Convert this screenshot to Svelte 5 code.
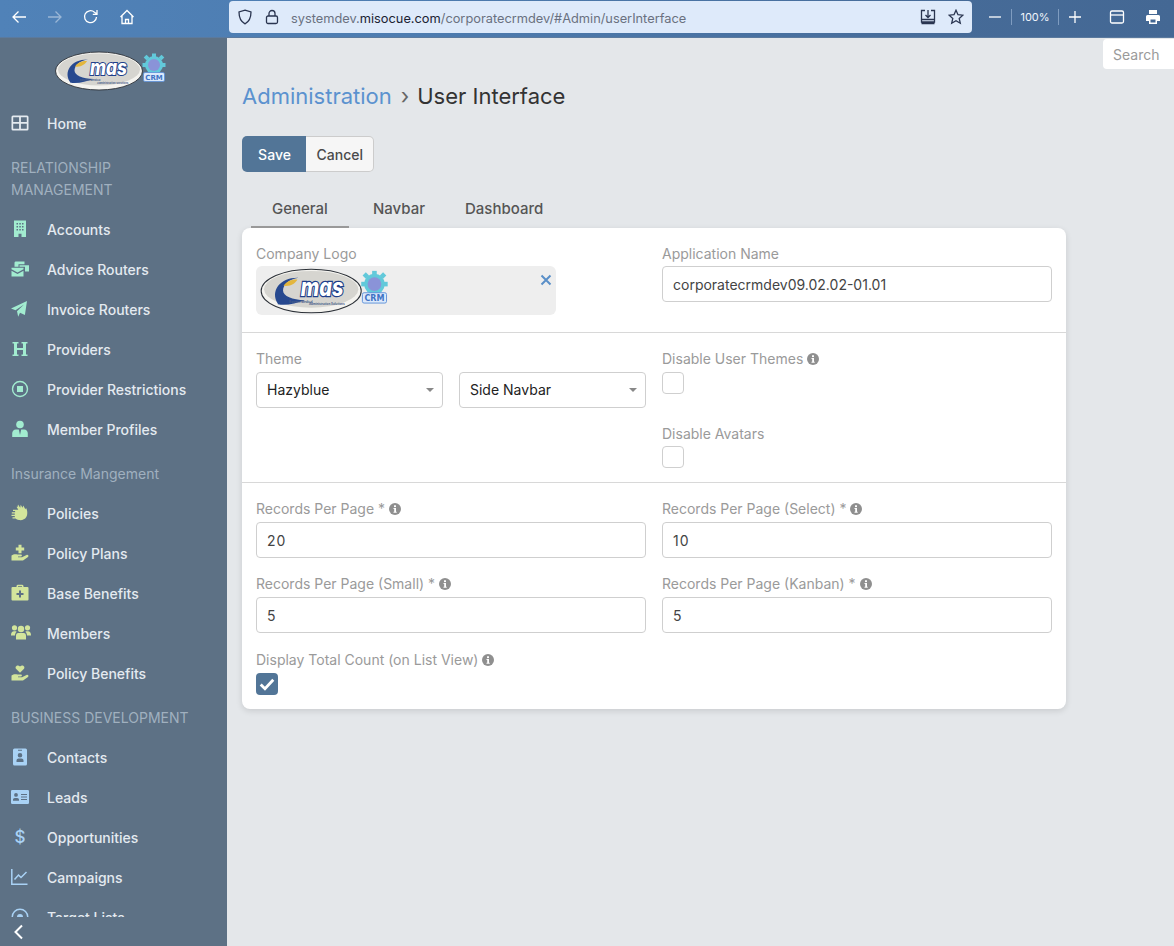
<script lang="ts">
  // sidebar groups: each icon is a small svg path set in an 18 box
  const groups = [
    { label: null, color: "#e4eaf0", items: [["Home", "home"]] },
    {
      label: "RELATIONSHIP MANAGEMENT",
      color: "#a2ecd0",
      items: [
        ["Accounts", "building"],
        ["Advice Routers", "mail"],
        ["Invoice Routers", "plane"],
        ["Providers", "hospital"],
        ["Provider Restrictions", "stop"],
        ["Member Profiles", "tie"],
      ],
    },
    {
      label: "Insurance Mangement",
      color: "#d3e59c",
      items: [
        ["Policies", "hands"],
        ["Policy Plans", "handplus"],
        ["Base Benefits", "medkit"],
        ["Members", "users"],
        ["Policy Benefits", "handheart"],
      ],
    },
    {
      label: "BUSINESS DEVELOPMENT",
      color: "#a9d2f5",
      items: [
        ["Contacts", "contact"],
        ["Leads", "card"],
        ["Opportunities", "dollar"],
        ["Campaigns", "chart"],
        ["Target Lists", "target"],
      ],
    },
  ];

  const tabs = ["General", "Navbar", "Dashboard"];
</script>

{#snippet icon(name)}
  <svg class="nav-icon" viewBox="0 0 18 18" aria-hidden="true">
    {#if name === "home"}
      <path d="M2 1.500h14a1.500 1.500 0 0 1 1.500 1.500v12a1.500 1.500 0 0 1-1.500 1.500H2A1.500 1.500 0 0 1 .5 15V3A1.500 1.500 0 0 1 2 1.500zM2.200 3.200v4.700h5.900V3.200zm7.700 0v4.700h5.900V3.200zM2.200 9.800v5h5.900v-5zm7.700 0v5h5.900v-5z" fill-rule="evenodd" />
    {:else if name === "building"}
      <path d="M3 .5h12v16.500h-4.500V13.800h-3V17H3zM5.500 3v1.500H7V3zm2.800 0v1.500h1.500V3zm2.700 0v1.500h1.500V3zM5.500 6v1.500H7V6zm2.800 0v1.500h1.500V6zm2.700 0v1.500h1.500V6zM5.500 9v1.500H7V9zm2.800 0v1.500h1.500V9zm2.700 0v1.500h1.500V9z" fill-rule="evenodd" />
    {:else if name === "mail"}
      <path d="M4.500 1.500h9v2.800H7.500v2.400H3.500V3a1.500 1.500 0 0 1 1-1.500zM8.500 5.200H18v6.300h-4v-4.800H8.500zM.5 7.800h12v1.500L6.500 12.500.5 9.300zM.5 10.800l6 3.200 6-3.200v5.700H.5z" />
    {:else if name === "plane"}
      <path d="M16 1 13.900 15 9 12.800 7.200 16.800 6 11.200 13 4.500 4.500 10.300 0 8.500z" />
    {:else if name === "hospital"}
      <path d="M1.500 2h6v1.500H6v4.500h6V3.500h-1.500V2h6v1.500H15v11h1.500V16h-6v-1.500H12V10H6v4.500h1.500V16h-6v-1.500H3v-11H1.500z" />
    {:else if name === "stop"}
      <path d="M9 .8a8.200 8.200 0 1 1 0 16.400A8.200 8.200 0 0 1 9 .8zm0 1.400a6.800 6.800 0 1 0 0 13.600A6.800 6.800 0 0 0 9 2.200zM6 6h6v6H6z" fill-rule="evenodd" />
    {:else if name === "tie"}
      <circle cx="9" cy="4.500" r="3.800" /><path d="M5 9.500h2.800L9 15l1.200-5.500H13c2.500 0 3.800 1.800 3.800 4v3.500H1.200v-3.500c0-2.200 1.300-4 3.800-4z" />
    {:else if name === "hands"}
      <path d="M7 .5l2.200 3.200L9.700.8l1.800 3 .8-2.300 2 3.800.8-1.300c1.400 2.500 1.700 6.500.2 9-1.500 2.600-4.500 3.500-7.500 3-1.300-.2-2.500-.7-3.300-1.500H1.500v-1.300h2.300V12H.5v-1.300h3.300V9.500H.8V8.200h3.300V7H2V5.800h5.300L5.500 2.800l1 .2z" />
    {:else if name === "handplus"}
      <path d="M7.500 .8h3v2.700h2.700v3h-2.700v2.700h-3V6.500H4.800v-3h2.700zM.5 11.500c2-1.500 4-1.500 6-1h3.500c1.300 0 1.300 2-.3 2H7v.8h4l4.500-2.400c1.500-.6 2.700 1 1.500 2L12 16.500H.5z" />
    {:else if name === "medkit"}
      <path d="M5.500 3V2A1.500 1.500 0 0 1 7 .8h4A1.500 1.500 0 0 1 12.500 2v1h4a1 1 0 0 1 1 1v11.500a1 1 0 0 1-1 1h-15a1 1 0 0 1-1-1V4a1 1 0 0 1 1-1zM7 2.300V3h4v-.7zM8 6.500V9H5.500v2H8v2.500h2V11h2.500V9H10V6.500z" fill-rule="evenodd" />
    {:else if name === "users"}
      <circle cx="3.500" cy="3.800" r="2.600" /><circle cx="16.500" cy="3.800" r="2.600" /><circle cx="10" cy="5" r="3.200" /><path d="M0 11c0-2.300 1.200-3.800 3-3.800h2l.6.500C4.500 8.600 4 10 4 11.500H0zM20 11c0-2.300-1.200-3.800-3-3.800h-2l-.6.500c1.100.9 1.600 2.300 1.600 3.800h4zM7.300 9h5.400c1.500 0 2.300 1.300 2.300 2.800V15.500H5v-3.700C5 10.300 5.800 9 7.300 9z" />
    {:else if name === "handheart"}
      <path d="M9 8.800 5 4.700C3.500 2.800 6.500 0 9 2.500c2.500-2.500 5.500.3 4 2.200zM.5 11.500c2-1.500 4-1.500 6-1h3.500c1.300 0 1.300 2-.3 2H7v.8h4l4.500-2.400c1.500-.6 2.700 1 1.500 2L12 16.500H.5z" />
    {:else if name === "contact"}
      <path d="M3.500.5h11A1.500 1.500 0 0 1 16 2v14a1.500 1.500 0 0 1-1.500 1.500h-11A1.500 1.500 0 0 1 2 16V2A1.500 1.500 0 0 1 3.500.5zM7 1.800v1h4v-1zM9 5a2.300 2.300 0 1 0 0 4.600A2.300 2.300 0 0 0 9 5zm-3.500 9h7v-1.500c0-1.200-1-2-2-2h-3c-1 0-2 .8-2 2z" fill-rule="evenodd" />
    {:else if name === "card"}
      <path d="M1.200 2h15.600A1.200 1.200 0 0 1 18 3.200v11.600a1.200 1.200 0 0 1-1.200 1.200H1.200A1.200 1.200 0 0 1 0 14.800V3.200A1.200 1.200 0 0 1 1.200 2zM5 5a1.900 1.900 0 1 0 0 3.800A1.900 1.900 0 0 0 5 5zM2 12.800h6v-1C8 10.800 7.200 10 6.200 10H3.800C2.800 10 2 10.800 2 11.800zM10 6v1h6V6zm0 2.500v1h6v-1zm0 2.500v1h6v-1z" fill-rule="evenodd" />
    {:else if name === "dollar"}
      <text x="9" y="15" text-anchor="middle" class="glyph">$</text>
    {:else if name === "chart"}
      <path d="M.8 1V16.200H16.500" class="line" /><path d="M3.500 11.500 7.500 7 10 9.500 15.500 4" class="line" />
    {:else}
      <path d="M9 .5a8.500 8.500 0 1 1 0 17 8.500 8.500 0 0 1 0-17zm0 1.500a7 7 0 1 0 0 14 7 7 0 0 0 0-14zM9 6a3 3 0 1 1 0 6 3 3 0 0 1 0-6z" fill-rule="evenodd" />
    {/if}
  </svg>
{/snippet}

{#snippet logo()}
  <svg class="logo" viewBox="0 0 112 40" aria-label="emas CRM">
    <ellipse cx="44" cy="20" rx="43.500" ry="19" fill="#f4f3ef" stroke="#2c3138" stroke-width=".9" />
    <ellipse cx="44" cy="18.500" rx="41" ry="16" fill="#d6d5d0" />
    <path d="M15 31C8 20 17 8 33 8.500c-8 1-13.500 6-13.500 11 0 5 8 8 19 8.500-8 3-17 5-23.500 3.500z" fill="#27498f" />
    <path d="M20 15.500c2-3.500 7-6 12-5.500-1.500 3-6 6.500-12 5.500z" fill="#e3b63d" />
    <text x="35" y="24" class="logo-word" textLength="37" lengthAdjust="spacingAndGlyphs">mas</text>
    <text x="25" y="30" class="logo-sub">Eastern Medical</text>
    <text x="42" y="32.500" class="logo-sub">Administration Solutions</text>
    <g fill="#62c9da">
      <circle cx="99" cy="14" r="9" />
      <rect x="97" y="2.500" width="4" height="4" /><rect x="97" y="21" width="4" height="4" />
      <rect x="87.500" y="12" width="4" height="4" /><rect x="106.500" y="12" width="4" height="4" />
      <rect x="89.500" y="4.500" width="4" height="4" transform="rotate(45 91.500 6.500)" /><rect x="104.500" y="4.500" width="4" height="4" transform="rotate(45 106.500 6.500)" />
    </g>
    <circle cx="99" cy="14" r="6" fill="#8a93d8" />
    <rect x="88.500" y="21.500" width="21" height="9" rx="1.500" fill="#dbe9fb" stroke="#5b8fd8" stroke-width=".8" />
    <text x="99" y="28.800" text-anchor="middle" class="logo-crm">CRM</text>
  </svg>
{/snippet}

{#snippet info()}
  <svg class="info" viewBox="0 0 12 12" aria-hidden="true">
    <circle cx="6" cy="6" r="6" fill="#8f8f8f" />
    <rect x="5" y="2.300" width="2" height="1.800" fill="#fff" />
    <path d="M4.500 5h2.500v3.700h.7v1H4.500v-1h.7V6h-.7z" fill="#fff" />
  </svg>
{/snippet}

<div class="browser">
  <div class="nav-buttons">
    <svg viewBox="0 0 16 16"><path d="M15 8H2M7.500 2.500 2 8l5.500 5.500" /></svg>
    <svg viewBox="0 0 16 16" class="dim"><path d="M1 8h13M8.500 2.500 14 8l-5.500 5.500" /></svg>
    <svg viewBox="0 0 16 16"><path d="M13.500 8A6 6 0 1 1 11.500 3.200L14 5M14 1v4.300H9.800" /></svg>
    <svg viewBox="0 0 16 16"><path d="M1.500 8 8 1.500 14.500 8M3 7v7.500h10V7M6.500 14.500v-4h3v4" /></svg>
  </div>
  <div class="urlbar">
    <svg class="url-icon" viewBox="0 0 16 16"><path d="M8 1.200 14 3c0 6-1.500 9.500-6 11.800C3.500 12.500 2 9 2 3z" /></svg>
    <svg class="url-icon" viewBox="0 0 16 16"><rect x="2.500" y="7" width="11" height="7.500" rx="1.500" /><path d="M5 7V4.500a3 3 0 0 1 6 0V7" /></svg>
    <span class="url">systemdev.<b>misocue.com</b>/corporatecrmdev/#Admin/userInterface</span>
    <span class="url-end">
      <svg class="url-icon" viewBox="0 0 16 16"><path d="M5 1.500H1.500v11.500h13V1.500H11M8 1v7M5.500 6 8 8.500 10.500 6M1.500 10.500h13M1.500 14.500h13" /></svg>
      <svg class="url-icon" viewBox="0 0 16 16"><path d="M8 1.200l2 4.500 4.900.5-3.700 3.200 1.100 4.800L8 11.700l-4.300 2.500 1.100-4.800L1.100 6.200 6 5.700z" /></svg>
    </span>
  </div>
  <div class="zoom-group">
    <svg viewBox="0 0 12 12"><path d="M0 6h12" /></svg>
    <span class="zoom-val">100%</span>
    <svg viewBox="0 0 12 12"><path d="M0 6h12M6 0v12" /></svg>
  </div>
  <div class="tools">
    <svg viewBox="0 0 16 16"><rect x="1.500" y="2" width="13" height="12" rx="1.500" /><path d="M1.500 6h13" /></svg>
    <svg viewBox="0 0 16 16" class="solid"><path d="M4 1h8v4H4zM2.500 6h11A1.500 1.500 0 0 1 15 7.500V12h-3v3H4v-3H1V7.500A1.500 1.500 0 0 1 2.500 6zM5.500 10.500v3h5v-3z" fill-rule="evenodd" /></svg>
  </div>
</div>

<div class="layout">
  <aside class="sidebar">
    <div class="brand">{@render logo()}</div>
    <nav class="nav">
      {#each groups as g}
        {#if g.label}<div class="nav-label">{g.label}</div>{/if}
        {#each g.items as [text, name]}
          <div class="nav-item" style="color: {g.color}">
            {@render icon(name)}
            <span>{text}</span>
          </div>
        {/each}
      {/each}
    </nav>
    <div class="collapse">
      <svg viewBox="0 0 12 16"><path d="M9 1.500 2.500 8 9 14.500" /></svg>
    </div>
  </aside>

  <main class="page">
    <div class="search">Search</div>
    <h1><span class="crumb">Administration</span><span class="sep">›</span>User Interface</h1>

    <div class="actions">
      <button class="btn primary">Save</button>
      <button class="btn">Cancel</button>
    </div>

    <div class="tabs">
      {#each tabs as t, i}
        <div class="tab" class:active={i === 0}>{t}</div>
      {/each}
    </div>

    <div class="card">
      <section class="row top">
        <div class="field">
          <label>Company Logo</label>
          <div class="logo-box">
            {@render logo()}
            <svg class="remove" viewBox="0 0 12 12"><path d="M1.500 1.500l9 9M10.500 1.500l-9 9" /></svg>
          </div>
        </div>
        <div class="field">
          <label>Application Name</label>
          <div class="input">corporatecrmdev09.02.02-01.01</div>
        </div>
      </section>

      <section class="row theme">
        <div class="field">
          <label>Theme</label>
          <div class="selects">
            <div class="input select">Hazyblue</div>
            <div class="input select">Side Navbar</div>
          </div>
        </div>
        <div class="checks">
          <div class="field">
            <label>Disable User Themes {@render info()}</label>
            <div class="checkbox"></div>
          </div>
          <div class="field avatars">
            <label>Disable Avatars</label>
            <div class="checkbox"></div>
          </div>
        </div>
      </section>

      <section class="row records">
        <div class="field">
          <label>Records Per Page * {@render info()}</label>
          <div class="input num">20</div>
        </div>
        <div class="field">
          <label>Records Per Page (Select) * {@render info()}</label>
          <div class="input num">10</div>
        </div>
        <div class="field">
          <label>Records Per Page (Small) * {@render info()}</label>
          <div class="input num">5</div>
        </div>
        <div class="field">
          <label>Records Per Page (Kanban) * {@render info()}</label>
          <div class="input num">5</div>
        </div>
        <div class="field total">
          <label>Display Total Count (on List View) {@render info()}</label>
          <div class="checkbox checked">
            <svg viewBox="0 0 14 14"><path d="M3 7.300 5.700 10 11 4.300" /></svg>
          </div>
        </div>
      </section>
    </div>
  </main>
</div>

<style>
  :global(body) {
    margin: 0;
    font-family: Inter, "Noto Sans", sans-serif;
    background: #e4e7ea;
    height: 946px;
    overflow: hidden;
  }
  .browser {
    height: 34px;
    padding-bottom: 3px;
    border-bottom: 1px solid #5b7a9e;
    background: linear-gradient(90deg, #5082b8 0%, #4d7cb0 35%, #466b98 80%, #446894 100%);
    display: flex;
    align-items: center;
    box-sizing: content-box;
  }
  .browser svg {
    fill: none;
    stroke: #fff;
    stroke-width: 1.300;
  }
  .nav-buttons {
    width: 229px;
    padding-left: 11px;
    box-sizing: border-box;
    display: flex;
    gap: 20px;
  }
  .nav-buttons svg {
    width: 16px;
    height: 16px;
  }
  .nav-buttons .dim {
    stroke: #9ab6d6;
  }
  .urlbar {
    width: 743px;
    height: 32px;
    background: #deeafa;
    border-radius: 4px;
    display: flex;
    align-items: center;
    padding: 0 8px;
    box-sizing: border-box;
    gap: 11px;
  }
  .browser .url-icon {
    width: 16px;
    height: 16px;
    stroke: #2a3550;
    flex: none;
  }
  .url {
    font-size: 12.800px;
    color: #6a7180;
    padding-top: 3px;
  }
  .url b {
    font-weight: 400;
    color: #1b2233;
  }
  .url-end {
    margin-left: auto;
    display: flex;
    gap: 12px;
  }
  .zoom-group {
    display: flex;
    align-items: center;
    margin-left: 17px;
    color: #f1f5fb;
  }
  .zoom-group svg {
    width: 12px;
    height: 12px;
  }
  .zoom-val {
    font-size: 11px;
    width: 48px;
    box-sizing: border-box;
    margin: 0 10px;
    text-align: center;
    border-left: 1px solid #7f9cc0;
    border-right: 1px solid #7f9cc0;
    line-height: 16px;
  }
  .tools {
    display: flex;
    gap: 20px;
    margin-left: 28px;
  }
  .tools svg {
    width: 16px;
    height: 16px;
  }
  .browser .solid {
    fill: #fff;
    stroke: none;
  }

  .layout {
    display: flex;
    height: 908px;
  }
  .sidebar {
    width: 227px;
    flex: none;
    background: #5d7185;
    display: flex;
    flex-direction: column;
  }
  .brand {
    height: 65px;
    flex: none;
    display: flex;
    justify-content: center;
    align-items: flex-start;
    padding: 13px 5px 0 0;
    box-sizing: border-box;
  }
  .logo {
    width: 112px;
    height: 40px;
  }
  .nav {
    flex: 1;
    overflow: hidden;
    min-height: 0;
  }
  .nav-label {
    font-size: 14px;
    line-height: 22px;
    color: #a0b0bf;
    padding: 14px 30px 8px 11px;
  }
  .nav-item {
    height: 40px;
    display: flex;
    align-items: center;
    padding-left: 11px;
  }
  .nav-item span {
    margin-left: 18px;
    color: #e4eaf0;
    font-size: 14px;
    font-weight: 500;
  }
  .nav-icon {
    width: 18px;
    height: 18px;
    fill: currentColor;
    flex: none;
    overflow: visible;
  }
  .nav-icon .line {
    fill: none;
    stroke: currentColor;
    stroke-width: 1.500;
  }
  .nav-icon .glyph {
    font-size: 17px;
    font-weight: 500;
    fill: currentColor;
  }
  .collapse {
    height: 29px;
    flex: none;
    padding-left: 13px;
    display: flex;
    align-items: center;
  }
  .collapse svg {
    width: 12px;
    height: 16px;
    fill: none;
    stroke: #fff;
    stroke-width: 2;
  }

  .page {
    flex: 1;
    position: relative;
    padding: 0 15px;
  }
  .search {
    position: absolute;
    top: 1px;
    right: 0;
    width: 71px;
    height: 30px;
    box-sizing: border-box;
    padding: 8px 0 0 10px;
    background: #fff;
    border-radius: 4px 0 0 4px;
    color: #9a9a9a;
    font-size: 14px;
    line-height: 16px;
  }
  h1 {
    margin: 43px 0 0;
    font-size: 22px;
    line-height: 30px;
    font-weight: 400;
    color: #333;
  }
  .crumb {
    color: #5b92cf;
  }
  .sep {
    color: #666;
    margin: 0 8px 0 9px;
  }
  .actions {
    display: flex;
    margin-top: 25px;
  }
  .btn {
    height: 36px;
    font: 500 14px Inter, sans-serif;
    padding: 0 10.500px;
    background: #f6f6f6;
    color: #4a4a4a;
    border: 1px solid #ccc;
    border-left: 0;
    border-radius: 0 5px 5px 0;
  }
  .btn.primary {
    width: 64px;
    padding: 0 0 0 1px;
    background: #527597;
    color: #fff;
    border: 0;
    border-radius: 5px 0 0 5px;
  }
  .tabs {
    display: flex;
    margin-top: 20px;
    margin-left: 9px;
    height: 36px;
  }
  .tab {
    padding: 0 21px;
    font-size: 15px;
    font-weight: 500;
    color: #555;
    line-height: 33px;
    box-sizing: border-box;
    height: 36px;
  }
  .tab + .tab {
    padding: 0 20px;
  }
  .tab:nth-child(2) {
    margin-left: 4px;
  }
  .tab.active {
    border-bottom: 2px solid #999;
    position: relative;
    z-index: 1;
  }
  .card {
    background: #fff;
    width: 824px;
    border-radius: 8px;
    box-shadow: 0 2px 6px rgba(0, 0, 0, 0.12);
  }
  .row {
    display: grid;
    grid-template-columns: 390px 390px;
    column-gap: 16px;
    padding: 17px 14px 0;
  }
  .row.top {
    height: 105px;
    box-sizing: border-box;
    border-bottom: 1px solid #d8d8d8;
  }
  .row.theme {
    height: 150px;
    box-sizing: border-box;
    border-bottom: 1px solid #d8d8d8;
  }
  .row.records {
    row-gap: 17px;
    padding-bottom: 14px;
  }
  .field label {
    display: flex;
    align-items: center;
    gap: 4px;
    font-size: 14px;
    line-height: 17px;
    color: #9a9a9a;
    margin-bottom: 5px;
  }
  .top .field label,
  .avatars label {
    margin-bottom: 4px;
  }
  .total {
    margin-top: 1px;
  }
  .info {
    width: 12px;
    height: 12px;
  }
  .input {
    height: 36px;
    box-sizing: border-box;
    border: 1px solid #cfcfcf;
    border-radius: 4px;
    padding: 0 10px;
    font-size: 14px;
    line-height: 36px;
    color: #444;
    background: #fff;
    position: relative;
  }
  .num {
    letter-spacing: 1px;
  }
  .selects {
    display: grid;
    grid-template-columns: 187px 187px;
    gap: 16px;
  }
  .select {
    color: #222;
    line-height: 34px;
  }
  .select::after {
    content: "";
    position: absolute;
    right: 8px;
    top: 15px;
    border: 4px solid transparent;
    border-top-color: #888;
    border-bottom: 0;
  }
  .checks {
    display: flex;
    flex-direction: column;
    gap: 31px;
  }
  .checkbox {
    width: 22px;
    height: 22px;
    box-sizing: border-box;
    border: 1px solid #cfcfcf;
    border-radius: 4px;
  }
  .checkbox.checked {
    background: #527597;
    border: 0;
  }
  .checkbox svg {
    width: 22px;
    height: 22px;
    fill: none;
    stroke: #fff;
    stroke-width: 1.800;
    display: block;
  }
  .logo-box {
    width: 300px;
    height: 49px;
    background: #eee;
    border-radius: 6px;
    position: relative;
    padding: 2px 0 0 4px;
    box-sizing: border-box;
  }
  .logo-box .logo {
    width: 130px;
    height: 46px;
  }
  .remove {
    position: absolute;
    top: 8px;
    right: 4px;
    width: 12px;
    height: 12px;
    fill: none;
    stroke: #5a8fc8;
    stroke-width: 2;
  }
  .logo-word {
    font: italic 800 21px Inter, sans-serif;
    fill: #fff;
    stroke: #1f3f8a;
    stroke-width: 2.200;
    paint-order: stroke;
  }
  .logo-sub {
    font: 700 2.600px Inter, sans-serif;
    fill: #4a5f8a;
  }
  .logo-crm {
    font: 700 7px "DejaVu Sans", sans-serif;
    fill: #3f73c4;
  }
</style>
